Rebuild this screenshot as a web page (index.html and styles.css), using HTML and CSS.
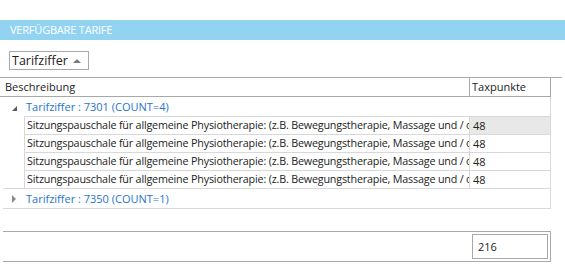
FILE: index.html
```html
<!DOCTYPE html>
<html lang="de">
<head>
    <meta charset="UTF-8">
    <title>Verfügbare Tarife</title>
    <link rel="stylesheet" href="styles.css">
</head>
<body>
    <div class="title-bar">VERFÜGBARE TARIFE</div>

    <div class="toolbar">
        <div class="group-button">
            <span>Tarifziffer</span>
            <span class="sort-up"></span>
        </div>
    </div>

    <div class="grid">
        <div class="grid-head">
            <div class="head-cells">
                <div class="cell desc">Beschreibung</div>
                <div class="cell tax">Taxpunkte</div>
            </div>
        </div>

        <div class="grid-body">
            <div class="group-row">
                <span class="expander open"></span>
                <span class="group-text">Tarifziffer : 7301 (COUNT=4)</span>
            </div>
            <div class="data-rows">
                <div class="data-row">
                    <div class="cell desc">Sitzungspauschale für allgemeine Physiotherapie: (z.B. Bewegungstherapie, Massage und / oder Elektrotherapie)</div>
                    <div class="cell tax focused">48</div>
                </div>
                <div class="data-row">
                    <div class="cell desc">Sitzungspauschale für allgemeine Physiotherapie: (z.B. Bewegungstherapie, Massage und / oder Elektrotherapie)</div>
                    <div class="cell tax">48</div>
                </div>
                <div class="data-row">
                    <div class="cell desc">Sitzungspauschale für allgemeine Physiotherapie: (z.B. Bewegungstherapie, Massage und / oder Elektrotherapie)</div>
                    <div class="cell tax">48</div>
                </div>
                <div class="data-row">
                    <div class="cell desc">Sitzungspauschale für allgemeine Physiotherapie: (z.B. Bewegungstherapie, Massage und / oder Elektrotherapie)</div>
                    <div class="cell tax">48</div>
                </div>
            </div>
            <div class="group-row last">
                <span class="expander closed"></span>
                <span class="group-text">Tarifziffer : 7350 (COUNT=1)</span>
            </div>
        </div>
    </div>

    <div class="footer">
        <div class="total">216</div>
    </div>
</body>
</html>
```

FILE: styles.css
```css
/* Global */
body {
    margin: 0;
    background: white;
    font-family: 'Open Sans', 'Liberation Sans', sans-serif;
    font-size: 11px;
    color: #222;
}

/* Header bar */
.title-bar {
    margin-top: 20px;
    height: 20px;
    line-height: 20px;
    padding-left: 10px;
    background: #92d3f2;
    color: white;
    font-size: 11px;
    letter-spacing: -0.2px;
}

/* Group-by button */
.toolbar {
    height: 37px;
    padding: 11px 0 0 9px;
    box-sizing: border-box;
}

.group-button {
    width: 80px;
    height: 19px;
    box-sizing: border-box;
    border: 1px solid #a8a8a8;
    display: flex;
    align-items: center;
    justify-content: space-between;
    padding: 0 7px 0 2px;
    font-size: 12.5px;
}

.sort-up {
    width: 0;
    height: 0;
    border-left: 4px solid transparent;
    border-right: 4px solid transparent;
    border-bottom: 4px solid #7a7a7a;
}

/* Grid */
.grid-head {
    width: 562px;
    border-top: 1px solid #a8a8a8;
}

.head-cells {
    width: 551px;
    height: 19px;
    box-sizing: border-box;
    display: flex;
    border-bottom: 1px solid #a8a8a8;
    border-right: 1px solid #a8a8a8;
}

.cell {
    white-space: nowrap;
    overflow: hidden;
    line-height: 18px;
}

.head-cells .desc {
    width: 470px;
    padding-left: 5px;
    box-sizing: border-box;
    border-right: 1px solid #a8a8a8;
}

.head-cells .tax {
    flex: 1;
    padding-left: 2px;
}

.grid-body {
    margin-left: 3px;
    width: 548px;
    box-sizing: border-box;
    border-right: 1px solid #d8d8d8;
    border-bottom: 1px solid #d8d8d8;
}

.group-row {
    height: 19px;
    line-height: 19px;
    display: flex;
    align-items: center;
    color: #1e74cc;
}

.group-row.last {
    border-top: 1px solid #d8d8d8;
    height: 19px;
}

.expander {
    width: 0;
    height: 0;
    margin: 0 9px 0 9px;
}

.expander.open {
    border-left: 5px solid transparent;
    border-bottom: 5px solid #595959;
    margin-top: 3px;
}

.expander.closed {
    border-top: 4px solid transparent;
    border-bottom: 4px solid transparent;
    border-left: 4px solid #8a8a8a;
    margin-right: 10px;
}

.data-rows {
    margin-left: 21px;
}

.data-row {
    display: flex;
    height: 18px;
    box-sizing: border-box;
    border-top: 1px solid #d8d8d8;
    border-left: 1px solid #d8d8d8;
}

.data-row .desc {
    width: 445px;
    padding-left: 2px;
    box-sizing: border-box;
    border-right: 1px solid #d8d8d8;
    line-height: 17px;
    font-size: 10.75px;
    letter-spacing: -0.18px;
}

.data-row .tax {
    flex: 1;
    padding-left: 3px;
    line-height: 17px;
}

.data-row .focused {
    background: #e8e8e8;
}

/* Footer summary */
.footer {
    margin: 22px 0 0 3px;
    width: 548px;
    height: 31px;
    box-sizing: border-box;
    border-top: 1px solid #a8a8a8;
    border-bottom: 1px solid #a8a8a8;
    border-right: 1px solid #a8a8a8;
    display: flex;
    justify-content: flex-end;
    align-items: center;
    padding-right: 2px;
}

.total {
    width: 76px;
    height: 25px;
    box-sizing: border-box;
    border: 1px solid #a8a8a8;
    line-height: 23px;
    padding-left: 5px;
}
```
